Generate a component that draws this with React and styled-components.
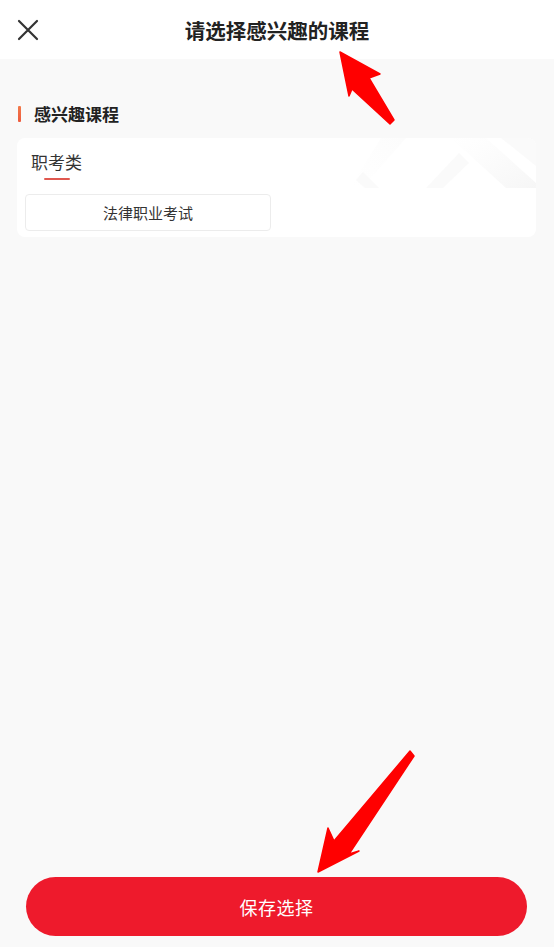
import React from "react";
import styled, { createGlobalStyle } from "styled-components";

const Global = createGlobalStyle`
  html, body { margin: 0; padding: 0; }
  body {
    background: #f9f9f9;
    font-family: "Noto Sans CJK SC", "Noto Sans", sans-serif;
    color: #333;
  }
`;

const Page = styled.div`
  position: relative;
  height: 947px;
  display: flex;
  flex-direction: column;
  background: #f9f9f9;
  overflow: hidden;
`;

const Header = styled.header`
  height: 59px;
  flex: none;
  background: #fff;
  display: grid;
  grid-template-columns: 59px 1fr 59px;
  align-items: center;
`;

const CloseBtn = styled.button`
  border: 0;
  background: none;
  padding: 0;
  margin-left: 16px;
  width: 24px;
  height: 24px;
  display: flex;
  align-items: center;
  justify-content: center;
  margin-top: 1px;
`;

const Title = styled.h1`
  margin: 0;
  text-align: center;
  font-size: 20.5px;
  font-weight: 600;
  color: #222;
  line-height: 1;
  margin-top: 2px;
`;

const Body = styled.main`
  flex: 1;
  padding: 0 18px 0 17px;
`;

const SectionTitle = styled.div`
  display: flex;
  align-items: center;
  gap: 13px;
  margin: 46px 0 0 1px;
  font-size: 17px;
  font-weight: 700;
  color: #222;
  line-height: 18px;
  &::before {
    content: "";
    width: 3px;
    height: 16px;
    background: linear-gradient(#f27a4a, #ee5b3e);
    border-radius: 1px;
  }
`;

const Card = styled.section`
  position: relative;
  margin-top: 15px;
  background: #fff;
  border-radius: 8px;
  padding: 13px 8px 6px 8px;
  overflow: hidden;
`;

const Deco = styled.svg`
  position: absolute;
  right: 0;
  top: 0;
  pointer-events: none;
`;

const Tabs = styled.div`
  position: relative;
  display: flex;
`;

const Tab = styled.div`
  display: flex;
  flex-direction: column;
  align-items: center;
  padding: 0 6px;
  font-size: 17px;
  color: #333;
  line-height: 22px;
  &::after {
    content: "";
    width: 26px;
    height: 2px;
    margin-top: 5px;
    background: ${(p) => (p.$active ? "#e0584f" : "transparent")};
    border-radius: 1px;
  }
`;

const Options = styled.div`
  position: relative;
  display: grid;
  grid-template-columns: 246px;
  margin-top: 14px;
`;

const Option = styled.button`
  height: 37px;
  border: 1px solid #ececec;
  border-radius: 4px;
  background: #fff;
  font-family: inherit;
  font-size: 15px;
  color: #333;
  padding: 0;
  cursor: pointer;
`;

const Footer = styled.footer`
  flex: none;
  padding: 0 27px 11px 26px;
`;

const SaveBtn = styled.button`
  width: 100%;
  height: 59px;
  border: 0;
  border-radius: 30px;
  background: #ee1a2c;
  color: #fff;
  font-family: inherit;
  font-size: 18px;
  letter-spacing: 0.5px;
  cursor: pointer;
`;

const Overlay = styled.svg`
  position: absolute;
  left: 0;
  top: 0;
  pointer-events: none;
`;

export default function App() {
  return (
    <Page>
      <Global />
      <Header>
        <CloseBtn aria-label="关闭">
          <svg width="22" height="22" viewBox="0 0 22 22">
            <path d="M2 2 L20 20 M20 2 L2 20" stroke="#333" strokeWidth="2.2" strokeLinecap="round" />
          </svg>
        </CloseBtn>
        <Title>请选择感兴趣的课程</Title>
        <span />
      </Header>
      <Body>
        <SectionTitle>感兴趣课程</SectionTitle>
        <Card>
          <Deco width="185" height="50" viewBox="0 0 185 50">
            <defs>
              <linearGradient id="g1" x1="0" y1="0" x2="1" y2="1">
                <stop offset="0" stopColor="#f4f4f4" stopOpacity="0" />
                <stop offset="1" stopColor="#efefef" stopOpacity="0.8" />
              </linearGradient>
              <linearGradient id="g2" x1="1" y1="0" x2="0" y2="1">
                <stop offset="0" stopColor="#f6f6f6" stopOpacity="0.7" />
                <stop offset="1" stopColor="#f8f8f8" stopOpacity="0" />
              </linearGradient>
            </defs>
            <polygon points="30,0 55,0 20,40 8,48 0,48" fill="url(#g2)" opacity="0.5" />
            <polygon points="5,42 12,34 28,50 14,50" fill="#f5f5f5" opacity="0.5" />
            <polygon points="100,0 135,0 185,45 185,50 155,50" fill="url(#g1)" opacity="0.7" />
            <polygon points="150,0 185,0 185,28" fill="#f6f6f6" opacity="0.6" />
            <polygon points="75,50 108,15 118,25 92,50" fill="#f7f7f7" opacity="0.6" />
          </Deco>
          <Tabs>
            <Tab $active>职考类</Tab>
          </Tabs>
          <Options>
            <Option>法律职业考试</Option>
          </Options>
        </Card>
      </Body>
      <Footer>
        <SaveBtn>保存选择</SaveBtn>
      </Footer>
      <Overlay width="554" height="947" viewBox="0 0 554 947">
        <polygon
          points="340,52 380,74 369,78 394,120 390,124 352,89 349,96"
          fill="#ff0000"
          stroke="#ff0000"
          strokeWidth="1.5"
          strokeLinejoin="round"
        />
        <polygon
          points="318,872 328,828 334,841 410,751 414,756 349,854 359,851"
          fill="#ff0000"
          stroke="#ff0000"
          strokeWidth="1.5"
          strokeLinejoin="round"
        />
      </Overlay>
    </Page>
  );
}
